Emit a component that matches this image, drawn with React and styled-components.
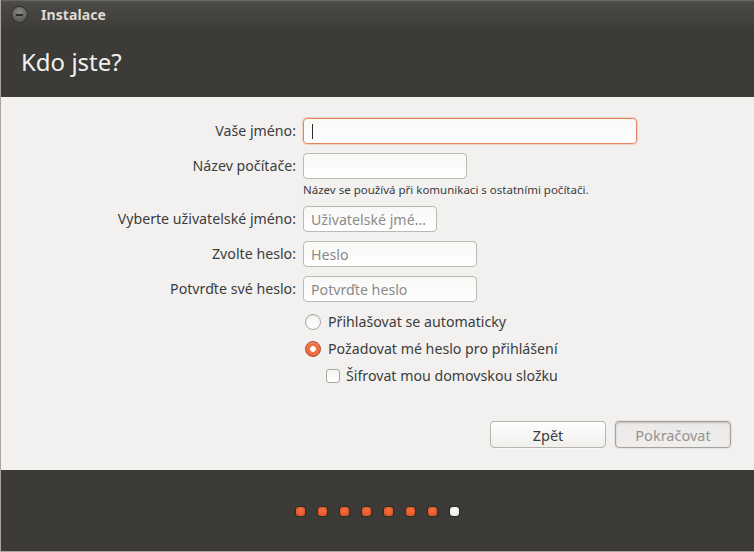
import React from "react";
import styled, { createGlobalStyle } from "styled-components";

const Global = createGlobalStyle`
  html, body { margin: 0; padding: 0; background: #3c3b37; }
  body { font-family: "Noto Sans", "DejaVu Sans", sans-serif; }
  * { box-sizing: border-box; }
`;

const Window = styled.div`
  width: 754px;
  height: 552px;
  display: flex;
  flex-direction: column;
  border-left: 1px solid #a8a69f;
  border-bottom: 1px solid #a8a69f;
  background: #3c3b37;
  overflow: hidden;
`;

const TitleBar = styled.div`
  height: 28px;
  display: flex;
  align-items: center;
  padding-left: 11px;
  gap: 14px;
  background: linear-gradient(#55534e 0px, #4a4945 2px, #3f3e3a 26px, #3c3b37 28px);
  border-top: 1px solid #67655f;
`;

const CloseBtn = styled.div`
  width: 15px;
  height: 15px;
  border-radius: 50%;
  background: radial-gradient(circle at 50% 35%, #8a8883, #5b5a55 70%, #4a4844);
  box-shadow: 0 0 0 1px #2f2e2b;
  display: flex;
  align-items: center;
  justify-content: center;
  &::after {
    content: "";
    width: 7px;
    height: 2px;
    background: #2e2d2a;
  }
`;

const Title = styled.div`
  color: #dfdbd2;
  font-weight: bold;
  font-size: 14px;
  letter-spacing: 0.1px;
`;

const Header = styled.div`
  height: 69px;
  display: flex;
  align-items: center;
  padding-left: 20px;
  padding-bottom: 3px;
  color: #f2f1f0;
  font-size: 24px;
`;

const Content = styled.div`
  flex: 1;
  background: #f2f1f0;
  padding: 21px 22px 0 0;
  display: flex;
  flex-direction: column;
`;

const Form = styled.div`
  display: grid;
  grid-template-columns: 295px 1fr;
  column-gap: 7px;
  align-items: center;
  font-size: 14.2px;
  color: #3c3c3c;
`;

const Label = styled.div`
  text-align: right;
  height: 26px;
  line-height: 26px;
  white-space: nowrap;
  margin-top: ${(p) => p.$mt || 0}px;
`;

const Input = styled.div`
  width: ${(p) => p.$w}px;
  height: 26px;
  margin-top: ${(p) => p.$mt || 0}px;
  border-radius: 4px;
  border: 1px solid ${(p) => (p.$focus ? "#e9835c" : "#bcb9b3")};
  box-shadow: ${(p) => (p.$focus ? "0 0 0 1px rgba(240,150,115,0.35)" : "none")};
  background: linear-gradient(#f8f8f7, #ffffff);
  padding-left: 7px;
  display: flex;
  align-items: center;
  color: #8b8b8b;
  font-size: 14.2px;
  white-space: nowrap;
  overflow: hidden;
`;

const Caret = styled.div`
  width: 1px;
  height: 15px;
  background: #2c2c2c;
  margin-left: 1px;
`;

const Hint = styled.div`
  grid-column: 2;
  font-size: 11.5px;
  color: #3c3c3c;
  margin-top: 4px;
  height: 14px;
  line-height: 14px;
  white-space: nowrap;
`;

const Options = styled.div`
  grid-column: 2;
  display: flex;
  flex-direction: column;
  margin-top: 6px;
`;

const Option = styled.div`
  display: flex;
  align-items: center;
  height: 27px;
  gap: ${(p) => p.$gap || 7}px;
  padding-left: ${(p) => p.$indent || 2}px;
  font-size: 14.2px;
  color: #3c3c3c;
  white-space: nowrap;
`;

const Radio = styled.div`
  width: 16px;
  height: 16px;
  border-radius: 50%;
  border: 1px solid ${(p) => (p.$on ? "#b4492a" : "#a9a6a0")};
  background: ${(p) =>
    p.$on
      ? "radial-gradient(circle, #ffffff 0 2.5px, #f2774a 3.2px, #dd5a2e 100%)"
      : "linear-gradient(#f4f4f3, #ffffff)"};
  box-shadow: ${(p) => (p.$on ? "inset 0 1px 1px rgba(255,255,255,0.35)" : "inset 0 1px 1px rgba(0,0,0,0.06)")};
`;

const Check = styled.div`
  width: 14px;
  height: 14px;
  border-radius: 3px;
  border: 1px solid #a9a6a0;
  background: linear-gradient(#f4f4f3, #ffffff);
`;

const Buttons = styled.div`
  margin-top: 32px;
  display: flex;
  justify-content: flex-end;
  gap: 9px;
  padding-right: 1px;
`;

const Button = styled.div`
  width: 116px;
  height: 27px;
  border-radius: 4px;
  display: flex;
  align-items: center;
  justify-content: center;
  font-size: 14.5px;
  border: 1px solid ${(p) => (p.$disabled ? "#a6a39d" : "#b8b5ae")};
  color: ${(p) => (p.$disabled ? "#959390" : "#3c3c3c")};
  background: ${(p) =>
    p.$disabled ? "linear-gradient(#ebeae8, #f0efed)" : "linear-gradient(#fefefe, #f0efed)"};
  box-shadow: ${(p) =>
    p.$disabled
      ? "inset 0 1px 2px rgba(0,0,0,0.2), 0 0 0 1px rgba(0,0,0,0.06)"
      : "0 1px 0 rgba(255,255,255,0.6)"};
`;

const Footer = styled.div`
  height: 81px;
  display: flex;
  align-items: center;
  justify-content: center;
  gap: 13px;
  background: #3c3b37;
  padding-top: 1px;
`;

const Dot = styled.div`
  width: 9px;
  height: 9px;
  border-radius: 3px;
  background: ${(p) =>
    p.$done
      ? "radial-gradient(circle at 50% 40%, #f2703f, #d9501f)"
      : "radial-gradient(circle at 50% 40%, #ffffff, #e1e0de)"};
  box-shadow: 0 0 1px 1px rgba(0, 0, 0, 0.25);
`;

export default function App() {
  return (
    <>
      <Global />
      <Window>
        <TitleBar>
          <CloseBtn />
          <Title>Instalace</Title>
        </TitleBar>
        <Header>Kdo jste?</Header>
        <Content>
          <Form>
            <Label>Vaše jméno:</Label>
            <Input $w={334} $focus>
              <Caret />
            </Input>

            <Label $mt={9}>Název počítače:</Label>
            <Input $w={164} $mt={9} />
            <Hint>Název se používá při komunikaci s ostatními počítači.</Hint>

            <Label $mt={9}>Vyberte uživatelské jméno:</Label>
            <Input $w={134} $mt={9}>Uživatelské jmé…</Input>

            <Label $mt={9}>Zvolte heslo:</Label>
            <Input $w={174} $mt={9}>Heslo</Input>

            <Label $mt={9}>Potvrďte své heslo:</Label>
            <Input $w={174} $mt={9}>Potvrďte heslo</Input>

            <Options>
              <Option>
                <Radio />
                Přihlašovat se automaticky
              </Option>
              <Option>
                <Radio $on />
                Požadovat mé heslo pro přihlášení
              </Option>
              <Option $indent={23} $gap={6}>
                <Check />
                Šifrovat mou domovskou složku
              </Option>
            </Options>
          </Form>
          <Buttons>
            <Button>Zpět</Button>
            <Button $disabled>Pokračovat</Button>
          </Buttons>
        </Content>
        <Footer>
          {[0, 1, 2, 3, 4, 5, 6].map((i) => (
            <Dot key={i} $done />
          ))}
          <Dot />
        </Footer>
      </Window>
    </>
  );
}
